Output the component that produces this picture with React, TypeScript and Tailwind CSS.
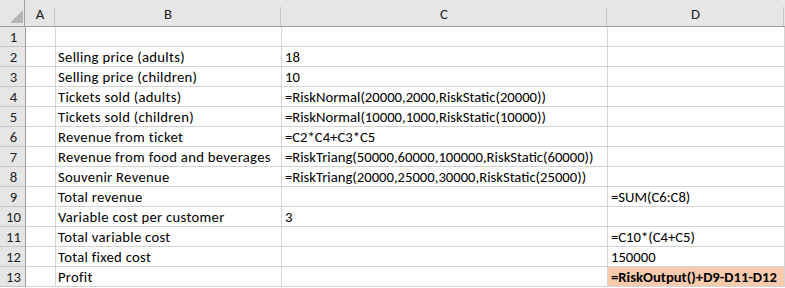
const rows: [string, string, string][] = [
  ["", "", ""],
  ["Selling price (adults)", "18", ""],
  ["Selling price (children)", "10", ""],
  ["Tickets sold (adults)", "=RiskNormal(20000,2000,RiskStatic(20000))", ""],
  ["Tickets sold (children)", "=RiskNormal(10000,1000,RiskStatic(10000))", ""],
  ["Revenue from ticket", "=C2*C4+C3*C5", ""],
  ["Revenue from food and beverages", "=RiskTriang(50000,60000,100000,RiskStatic(60000))", ""],
  ["Souvenir Revenue", "=RiskTriang(20000,25000,30000,RiskStatic(25000))", ""],
  ["Total revenue", "", "=SUM(C6:C8)"],
  ["Variable cost per customer", "3", ""],
  ["Total variable cost", "", "=C10*(C4+C5)"],
  ["Total fixed cost", "", "150000"],
  ["Profit", "", "=RiskOutput()+D9-D11-D12"],
];

const font = "font-['Calibri','Carlito','Liberation_Sans',sans-serif] text-[14.67px]";

function HeaderCell({ label, width }: { label: string; width: string }) {
  return (
    <div className={`relative flex h-[26px] ${width} shrink-0 items-center justify-center pt-[2px] text-[#222]`}>
      {label}
      <span className="absolute right-0 top-[7px] h-[19px] w-px bg-[#c6c6c6]" />
    </div>
  );
}

export default function App() {
  return (
    <div className={`h-[288px] w-[785px] overflow-hidden bg-white text-black ${font}`}>
      <div className="flex border-b border-[#9e9e9e] bg-[#e6e6e6]">
        <div className="relative h-[26px] w-[25px] shrink-0 border-r border-[#9e9e9e]">
          <svg className="absolute left-[10px] top-[10px]" width="13" height="13" viewBox="0 0 13 13">
            <polygon points="13,0 13,13 0,13" fill="#b5b5b5" />
          </svg>
        </div>
        <HeaderCell label="A" width="w-[30px]" />
        <HeaderCell label="B" width="w-[226px]" />
        <HeaderCell label="C" width="w-[326px]" />
        <HeaderCell label="D" width="w-[177px]" />
      </div>
      {rows.map(([b, c, d], i) => {
        const last = i === rows.length - 1;
        return (
          <div key={i} className="flex h-[20px] leading-[18px]">
            <div className="flex w-[26px] shrink-0 items-center justify-center border-b border-r border-[#9e9e9e] border-b-[#c6c6c6] bg-[#e6e6e6] pl-[2px] pt-[1px] text-[#222]">
              {i + 1}
            </div>
            <div className="w-[30px] shrink-0 border-b border-r border-[#d4d4d4]" />
            <div className="flex w-[226px] shrink-0 items-end whitespace-nowrap border-b border-r border-[#d4d4d4] pl-[2px] tracking-[0.3px]">
              {b}
            </div>
            <div className="flex w-[326px] shrink-0 items-end whitespace-nowrap border-b border-r border-[#d4d4d4] pl-[3px]">
              {c}
            </div>
            <div
              className={`flex w-[177px] shrink-0 items-end whitespace-nowrap border-b border-r border-[#d4d4d4] pl-[3px] ${
                last ? "bg-[#f8cbad] font-bold" : ""
              }`}
            >
              {d}
            </div>
          </div>
        );
      })}
    </div>
  );
}
